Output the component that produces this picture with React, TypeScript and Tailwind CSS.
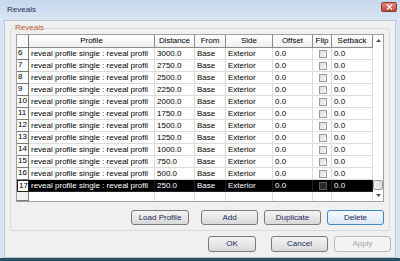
import React from 'react';

const rows = [
    { n: 6, d: '3000.0' },
    { n: 7, d: '2750.0' },
    { n: 8, d: '2500.0' },
    { n: 9, d: '2250.0' },
    { n: 10, d: '2000.0' },
    { n: 11, d: '1750.0' },
    { n: 12, d: '1500.0' },
    { n: 13, d: '1250.0' },
    { n: 14, d: '1000.0' },
    { n: 15, d: '750.0' },
    { n: 16, d: '500.0' },
    { n: 17, d: '250.0' },
];

const cols = 'grid grid-cols-[12px_126px_40px_31px_47px_40px_19px_41px]';

const Checkbox: React.FC<{ dark?: boolean }> = ({ dark }) => (
    <div
        className={`w-[8px] h-[8px] border ${dark ? 'border-[#5a5a5a] bg-[#2a2a2a]' : 'border-[#9a9a9a] bg-gradient-to-br from-[#dcdcdc] to-[#f8f8f8]'}`}
    />
);

const Button: React.FC<{ label: string; w: string; h?: string; focused?: boolean; disabled?: boolean }> = ({ label, w, h = 'h-[15px]', focused, disabled }) => (
    <button
        className={`${w} ${h} rounded-[3px] border text-[8px] leading-none flex items-center justify-center ${
            disabled
                ? 'border-[#b5b9bc] bg-[#f4f4f4] text-[#a8a8a8]'
                : focused
                  ? 'border-[#3c8ac4] bg-gradient-to-b from-[#f4f9fd] to-[#dde9f3] text-[#1f2a5c]'
                  : 'border-[#7a7a7a] bg-gradient-to-b from-[#f4f4f4] to-[#d9d9d9] text-[#1f2a5c]'
        }`}
    >
        {label}
    </button>
);

export default function App() {
    return (
        <div className="w-[400px] h-[261px] bg-[#d5e2f1] border-b-[3px] border-[#28505e] flex flex-col overflow-hidden" style={{ fontFamily: '"Liberation Sans", Arial, sans-serif' }}>
            {/* title bar */}
            <div className="h-[20px] shrink-0 bg-gradient-to-b from-[#c6d8ee] to-[#d9e5f3] flex items-center justify-between pl-[7px] pr-[3px]">
                <span className="text-[8px] text-[#1b2f5c]">Reveals</span>
                <div className="w-[16px] h-[10px] -mt-[6px] rounded-[2px] bg-gradient-to-b from-[#e08a7a] to-[#c2463a] border border-[#8a3a30] flex items-center justify-center">
                    <svg width="7" height="6" viewBox="0 0 7 6">
                        <path d="M1 0.5 L6 5.5 M6 0.5 L1 5.5" stroke="white" strokeWidth="1.4" />
                    </svg>
                </div>
            </div>

            {/* body */}
            <div className="flex-1 mx-[4px] border border-[#b9c7d6] bg-[#f0f0f0] flex flex-col">
                {/* group box */}
                <div className="relative mt-[7px] mx-[5px] border border-[#d5dadf] rounded-[3px] px-[5px] pt-[5px] pb-[5px]">
                    <span className="absolute -top-[6px] left-[3px] px-[1px] bg-[#f0f0f0] text-[8px] leading-[10px] text-[#c0502a]">Reveals</span>

                    {/* table */}
                    <div className="flex border border-[#a0a0a0] bg-white h-[168px]">
                        <div className="flex flex-col">
                            <div className={`${cols} h-[13px]`}>
                                <div className="border-r border-b border-[#7a7a7a] bg-[#fafafa]" />
                                {['Profile', 'Distance', 'From', 'Side', 'Offset', 'Flip', 'Setback'].map(h => (
                                    <div key={h} className="border-r border-b border-[#8a8a8a] bg-gradient-to-b from-white to-[#f1f1f1] text-[8px] leading-[12px] text-center text-black">
                                        {h}
                                    </div>
                                ))}
                            </div>
                            {rows.map(r => {
                                const sel = r.n === 17;
                                const cell = `border-r border-b ${sel ? 'border-[#202020] bg-black text-white' : 'border-[#dcdcdc] text-black'} text-[8px] leading-[11px] pl-[2px] whitespace-nowrap overflow-hidden`;
                                return (
                                    <div key={r.n} className={`${cols} h-[12px]`}>
                                        <div className={`border-r border-b ${sel ? 'border-[#202020] border-[1.5px]' : 'border-[#7a7a7a]'} bg-[#fbfbfb] text-[8px] leading-[10px] pl-[1px] text-black`}>
                                            {r.n}
                                        </div>
                                        <div className={cell}>reveal profile single : reveal profil</div>
                                        <div className={cell}>{r.d}</div>
                                        <div className={cell}>Base</div>
                                        <div className={cell}>Exterior</div>
                                        <div className={cell}>0.0</div>
                                        <div className={`${cell} flex items-center justify-center pl-0`}>
                                            <Checkbox dark={sel} />
                                        </div>
                                        <div className={cell}>0.0</div>
                                    </div>
                                );
                            })}
                            <div className={`${cols} h-[12px]`}>
                                <div className="border-r border-b border-[#7a7a7a] bg-[#f0f0f0]" />
                                {[0, 1, 2, 3, 4, 5, 6].map(i => (
                                    <div key={i} className="border-r border-[#dcdcdc]" />
                                ))}
                            </div>
                        </div>
                        {/* scrollbar */}
                        <div className="flex-1 flex flex-col items-center justify-between py-[4px] bg-white">
                            <svg width="5" height="3" viewBox="0 0 5 3">
                                <path d="M0 3 L2.5 0 L5 3 Z" fill="#505050" />
                            </svg>
                            <div className="flex flex-col items-center gap-[4px]">
                                <div className="w-[10px] h-[10px] rounded-[2px] border border-[#9a9a9a] bg-gradient-to-r from-[#f4f4f4] to-[#dcdcdc]" />
                                <svg width="5" height="3" viewBox="0 0 5 3">
                                    <path d="M0 0 L5 0 L2.5 3 Z" fill="#505050" />
                                </svg>
                            </div>
                        </div>
                    </div>

                    {/* row buttons */}
                    <div className="flex justify-end gap-[6px] mt-[8px]">
                        <Button label="Load Profile" w="w-[58px]" />
                        <div className="w-0" />
                        <Button label="Add" w="w-[57px]" />
                        <Button label="Duplicate" w="w-[57px]" />
                        <Button label="Delete" w="w-[57px]" focused />
                    </div>
                </div>

                {/* dialog buttons */}
                <div className="flex justify-end mt-[5px] mr-[4px]">
                    <Button label="OK" w="w-[48px]" h="h-[16px]" />
                    <div className="w-[15px]" />
                    <Button label="Cancel" w="w-[57px]" h="h-[16px]" />
                    <div className="w-[6px]" />
                    <Button label="Apply" w="w-[57px]" h="h-[16px]" disabled />
                </div>
            </div>
        </div>
    );
}
